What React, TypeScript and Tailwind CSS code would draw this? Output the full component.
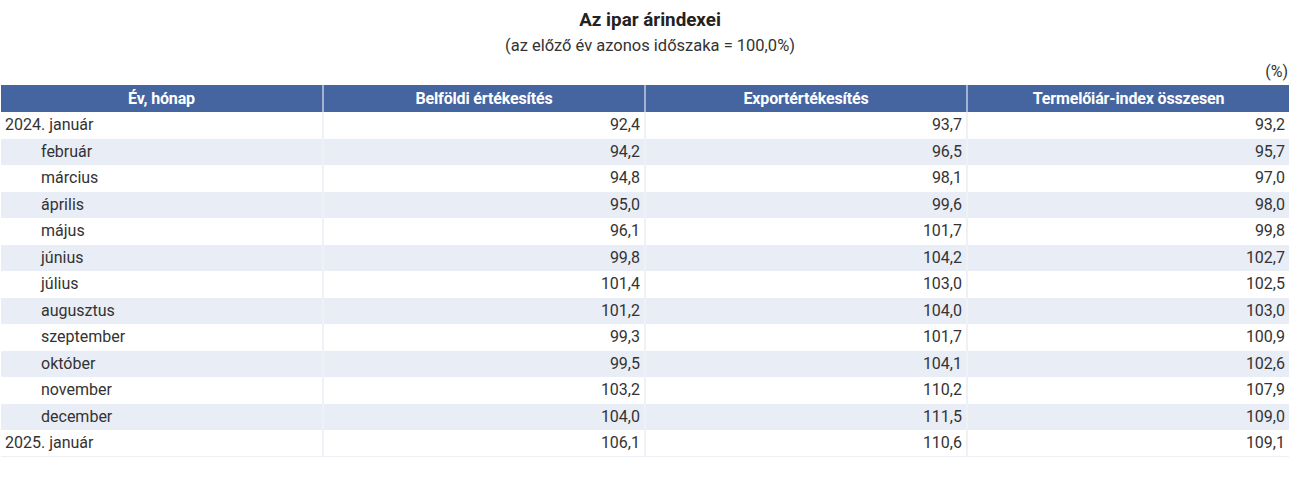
import React from 'react';

const rows = [
  { label: '2024. január', year: true, a: '92,4', b: '93,7', c: '93,2' },
  { label: 'február', a: '94,2', b: '96,5', c: '95,7' },
  { label: 'március', a: '94,8', b: '98,1', c: '97,0' },
  { label: 'április', a: '95,0', b: '99,6', c: '98,0' },
  { label: 'május', a: '96,1', b: '101,7', c: '99,8' },
  { label: 'június', a: '99,8', b: '104,2', c: '102,7' },
  { label: 'július', a: '101,4', b: '103,0', c: '102,5' },
  { label: 'augusztus', a: '101,2', b: '104,0', c: '103,0' },
  { label: 'szeptember', a: '99,3', b: '101,7', c: '100,9' },
  { label: 'október', a: '99,5', b: '104,1', c: '102,6' },
  { label: 'november', a: '103,2', b: '110,2', c: '107,9' },
  { label: 'december', a: '104,0', b: '111,5', c: '109,0' },
  { label: '2025. január', year: true, a: '106,1', b: '110,6', c: '109,1' },
];

const App = () => {
  return (
    <div className="w-[1300px] h-[488px] bg-white text-[#333333] font-['Roboto',sans-serif]">
      <div className="pt-[8px] text-center">
        <h1 className="text-[18.8px] leading-[24px] font-bold text-[#222]">Az ipar árindexei</h1>
        <p className="text-[16.5px] leading-[20px] mt-[4px]">(az előző év azonos időszaka = 100,0%)</p>
      </div>
      <div className="w-[1288px] ml-px">
        <div className="text-right text-[16px] leading-[20px] mt-[6px] pr-[1px]">(%)</div>
        <table className="w-full table-fixed border-collapse mt-[3px]">
          <thead>
            <tr className="bg-[#4465a0] text-white h-[27px]">
              <th className="text-[16px] font-bold tracking-[-0.15px] border-r-2 border-white/50">Év, hónap</th>
              <th className="text-[16px] font-bold tracking-[-0.15px] border-r-2 border-white/50">Belföldi értékesítés</th>
              <th className="text-[16px] font-bold tracking-[-0.15px] border-r-2 border-white/50">Exportértékesítés</th>
              <th className="text-[16px] font-bold tracking-[-0.15px]">Termelőiár-index összesen</th>
            </tr>
          </thead>
          <tbody>
            {rows.map((r, i) => (
              <tr
                key={i}
                className={`h-[26.5px] text-[16px] ${i % 2 === 1 ? 'bg-[#e9edf6]' : 'bg-white'} ${i === rows.length - 1 ? 'border-b border-[#eef0f4]' : ''}`}
              >
                <td className={`border-r-2 border-[#eef1f6] ${r.year ? 'pl-[4px]' : 'pl-[40px]'}`}>{r.label}</td>
                <td className="border-r-2 border-[#eef1f6] text-right pr-[4px]">{r.a}</td>
                <td className="border-r-2 border-[#eef1f6] text-right pr-[4px]">{r.b}</td>
                <td className="text-right pr-[4px]">{r.c}</td>
              </tr>
            ))}
          </tbody>
        </table>
      </div>
    </div>
  );
};

export default App;
